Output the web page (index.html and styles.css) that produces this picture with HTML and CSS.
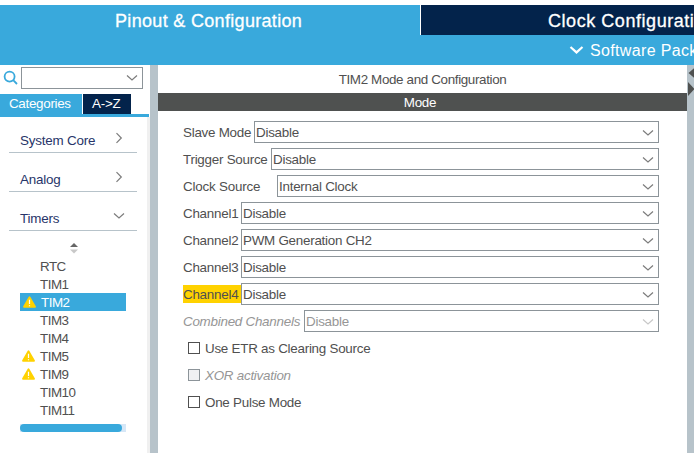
FILE: index.html
```html
<!DOCTYPE html>
<html lang="en">
<head>
<meta charset="utf-8">
<title>Pinout &amp; Configuration</title>
<link rel="stylesheet" href="styles.css">
</head>
<body>
<svg class="defs" width="0" height="0">
  <symbol id="down" viewBox="0 0 12 8"><path d="M1 1.5 6 6 11 1.5"/></symbol>
  <symbol id="right" viewBox="0 0 8 12"><path d="M1.5 1.2 6.3 6 1.5 10.8"/></symbol>
  <symbol id="warn" viewBox="0 0 13 12"><path d="M6.5 1.2 12 10.8H1Z" fill="#ffd200" stroke="#ffd200" stroke-width="1.8" stroke-linejoin="round"/><path class="mark" d="M6.5 3.8V8M6.5 9.2V10.3" stroke-width="1.2"/></symbol>
</svg>
<header class="top">
  <nav class="top-tabs">
    <div class="top-tab active"><span>Pinout &amp; Configuration</span></div>
    <div class="top-tab clock"><span>Clock Configuration</span></div>
  </nav>
  <div class="subbar">
    <svg class="pack-icon" width="15" height="10" viewBox="0 0 15 10"><path d="M1.5 2 7.5 7.4 13.5 2"/></svg>
    <span>Software Packs</span>
  </div>
</header>
<div class="workspace">
  <aside class="sidebar">
    <div class="search">
      <svg width="16" height="16" viewBox="0 0 16 16"><circle cx="6.6" cy="6.6" r="5"/><path d="M10.2 10.2 14 14"/></svg>
      <div class="search-box"><svg class="chev" width="12" height="8"><use href="#down"/></svg></div>
    </div>
    <div class="tabs"><div class="tab on">Categories</div><div class="tab az">A-&gt;Z</div></div>
    <div class="tree">
      <div class="group g1"><span>System Core</span><svg class="chev" width="8" height="12"><use href="#right"/></svg></div>
      <div class="group g2"><span>Analog</span><svg class="chev" width="8" height="12"><use href="#right"/></svg></div>
      <div class="group g3"><span>Timers</span><svg class="chev" width="12" height="8"><use href="#down"/></svg></div>
      <svg class="sort" width="8" height="11" viewBox="0 0 8 11"><path d="M0 4 4 0 8 4Z" fill="#666"/><path d="M0 6.5H8L4 10.5Z" fill="#c8c8c8"/></svg>
      <ul class="items">
        <li>RTC</li>
        <li>TIM1</li>
        <li class="selected"><svg width="13" height="12"><use href="#warn"/></svg>TIM2</li>
        <li>TIM3</li>
        <li>TIM4</li>
        <li><svg width="13" height="12"><use href="#warn"/></svg>TIM5</li>
        <li><svg width="13" height="12"><use href="#warn"/></svg>TIM9</li>
        <li>TIM10</li>
        <li>TIM11</li>
      </ul>
      <div class="scroll"><div class="thumb"></div></div>
    </div>
  </aside>
  <div class="divider"></div>
  <main class="panel">
    <h1>TIM2 Mode and Configuration</h1>
    <h2>Mode</h2>
    <div class="form">
      <div class="row"><label class="slave">Slave Mode</label><div class="select">Disable<svg class="chev" width="12" height="8"><use href="#down"/></svg></div></div>
      <div class="row"><label class="trigger">Trigger Source</label><div class="select">Disable<svg class="chev" width="12" height="8"><use href="#down"/></svg></div></div>
      <div class="row"><label class="source">Clock Source</label><div class="select">Internal Clock<svg class="chev" width="12" height="8"><use href="#down"/></svg></div></div>
      <div class="row"><label class="channel">Channel1</label><div class="select">Disable<svg class="chev" width="12" height="8"><use href="#down"/></svg></div></div>
      <div class="row"><label class="channel">Channel2</label><div class="select">PWM Generation CH2<svg class="chev" width="12" height="8"><use href="#down"/></svg></div></div>
      <div class="row"><label class="channel">Channel3</label><div class="select">Disable<svg class="chev" width="12" height="8"><use href="#down"/></svg></div></div>
      <div class="row"><label class="channel flagged">Channel4</label><div class="select">Disable<svg class="chev" width="12" height="8"><use href="#down"/></svg></div></div>
      <div class="row off"><label class="combined">Combined Channels</label><div class="select">Disable<svg class="chev" width="12" height="8"><use href="#down"/></svg></div></div>
      <div class="row check"><i class="box"></i><span>Use ETR as Clearing Source</span></div>
      <div class="row check off"><i class="box"></i><span>XOR activation</span></div>
      <div class="row check"><i class="box"></i><span>One Pulse Mode</span></div>
    </div>
  </main>
  <div class="edge"><svg width="7" height="32" viewBox="0 0 7 32"><path d="M1.5 8 8.5 2V14ZM1 17 7.5 24 1 31Z"/></svg></div>
</div>
</body>
</html>
```
FILE: styles.css
```css
* { box-sizing: border-box; }
body {
  margin: 0;
  width: 694px;
  height: 453px;
  padding-top: 5px;
  overflow: hidden;
  background: #fff;
  color: #505050;
  font: 13.4px/18px "Liberation Sans", Arial, sans-serif;
  letter-spacing: -.25px;
  white-space: nowrap;
}
.defs { position: absolute; }
svg { display: block; flex: none; fill: none; }
.chev { stroke: #7c7c7c; stroke-width: 1.2; }

.top { color: #fff; background: #39a9dc; height: 60px; overflow: hidden; }
.top-tabs { display: flex; height: 30px; font-size: 18px; line-height: 32px; -webkit-text-stroke: .3px #fff; }
.top-tab { overflow: hidden; letter-spacing: .32px; }
.top-tab.active { width: 420px; padding-left: 115px; }
.top-tab.clock { width: 274px; padding-left: 127px; border-left: 1px solid #fff; background: #03234b; letter-spacing: .55px; }
.subbar { display: flex; align-items: center; gap: 6px; height: 30px; padding-left: 569px; font-size: 16px; line-height: 32px; letter-spacing: .35px; }
.pack-icon { stroke: #fff; stroke-width: 2.2; }
.subbar span { padding-top: 2px; }

.workspace { display: flex; height: 388px; }
.sidebar { width: 150px; }
.search { display: flex; padding: 2px 0 0 4px; }
.search > svg { margin: 4px 1px 0 0; stroke: #39a9dc; stroke-width: 1.8; }
.search-box { display: flex; align-items: center; justify-content: flex-end; width: 122px; height: 22px; padding-right: 4px; border: 1px solid #8c9499; }
.tabs { display: flex; width: 149px; height: 28px; padding-top: 5px; border-bottom: 3px solid #39a9dc; color: #fff; line-height: 19px; }
.tab.on { width: 82px; padding-left: 9px; background: #39a9dc; letter-spacing: -.3px; }
.tab.az { width: 48px; margin-left: 1px; padding-left: 9px; background: #03234b; letter-spacing: -.2px; }
.tree { height: 341px; border-right: 3px solid #f0f0f0; padding: 0 10px 0 9px; }
.search > svg { margin: 3px 2px 0 -1px; }
.group { display: flex; justify-content: space-between; align-items: flex-end; height: 39px; padding: 0 14px 2px 11px; border-bottom: 1px solid #b7c3ca; color: #273569; letter-spacing: -.2px; }
.group.g1 { height: 36px; }
.group .chev { margin-bottom: 6px; }
.group.g3 { padding-right: 12px; }
.group.g3 .chev { margin-bottom: 8px; }
.sort { margin: 12px 0 0 61px; }
.items { list-style: none; width: 106px; margin: 3px 0 13px 11px; padding: 0; letter-spacing: -.5px; }
.items li { position: relative; height: 18px; padding-left: 20px; line-height: 19px; }
.items li svg { position: absolute; left: 2px; top: 3px; }
.mark { stroke: #fff; }
.items .selected { padding-left: 21px; color: #fff; background: #39a9dc; }
.items .selected svg { left: 3px; }
.scroll { width: 106px; height: 8px; margin: -8px 0 0 11px; background: #d6e7f7; }
.thumb { width: 102px; height: 8px; border-radius: 4px; background: #39a9dc; }
.divider { width: 8px; background: #b7c3ca; }

.panel { width: 529px; }
h1, h2 { margin: 0; font-size: inherit; font-weight: 400; text-align: center; }
h1 { height: 28px; line-height: 29px; letter-spacing: -.35px; }
h2 { height: 18px; line-height: 19px; padding-right: 5px; color: #fff; background: #4f5150; }
.form { padding: 8px 28px 0 25px; }
.row { display: flex; align-items: center; height: 27px; padding-bottom: 1px; }
.row label { flex: none; height: 18px; line-height: 19px; }
.row .slave { width: 71px; }
.row .trigger { width: 88px; }
.row .source { width: 94px; letter-spacing: -.2px; }
.row .channel { width: 58px; }
.row .combined { width: 121px; font-style: italic; }
.flagged { background: #ffd200; }
.select { display: flex; flex: 1; align-items: center; justify-content: space-between; height: 22px; padding: 1px 4px 0 1px; border: 1px solid #8c9499; }
.off { color: #969696; }
.off .chev { stroke: #c8c8c8; }
.check { padding-left: 5px; }
.check span { padding-top: 2px; }
.box { width: 12px; height: 12px; margin-right: 5px; border: 1px solid #505050; }
.check.off { font-style: italic; }
.off .box { border-color: #8c9499; background: #f0f1f3; }
.edge { width: 7px; background: #b7c3ca; overflow: hidden; }
.edge path { fill: #4f5150; }
```
